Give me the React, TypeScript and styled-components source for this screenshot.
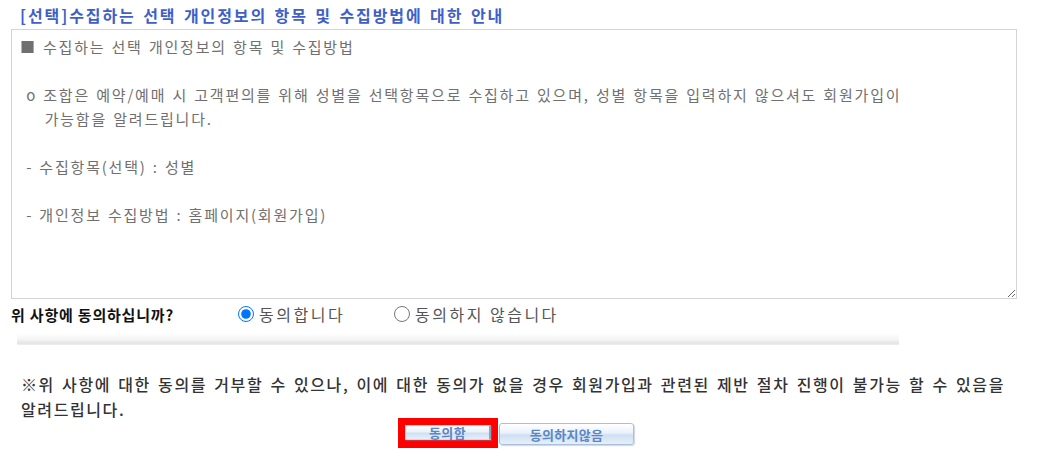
import React from 'react';
import styled, { createGlobalStyle } from 'styled-components';

const GlobalStyle = createGlobalStyle`
  body {
    margin: 0;
    background: #fff;
    font-family: 'Noto Sans CJK KR', 'Noto Sans', sans-serif;
  }
`;

const Page = styled.div`
  width: 1010px;
  padding: 4px 0 0 11px;
`;

const Title = styled.h3`
  margin: 0 0 3px;
  padding-left: 9px;
  font-size: 16px;
  line-height: 22px;
  font-weight: bold;
  color: #3f5fc8;
  letter-spacing: 1.9px;
  word-spacing: 2px;
`;

const InfoBox = styled.textarea`
  display: block;
  box-sizing: border-box;
  width: 1006px;
  height: 270px;
  margin: 0;
  padding: 5px 8px;
  border: 1px solid #d4d4d4;
  color: #707070;
  font-family: 'Noto Sans CJK KR', 'Noto Sans', sans-serif;
  font-size: 15px;
  line-height: 24px;
  letter-spacing: 1.8px;
  word-spacing: 1px;
  resize: both;
  outline: none;
`;

const AskRow = styled.div`
  display: flex;
  align-items: center;
  height: 30px;
`;

const Question = styled.span`
  width: 227px;
  font-size: 15px;
  font-weight: bold;
  color: #111;
  letter-spacing: 0.8px;
`;

const Choice = styled.label<{ $width: number }>`
  display: inline-flex;
  align-items: center;
  width: ${(p) => p.$width}px;
  font-size: 16px;
  color: #555;
  letter-spacing: 2.5px;

  input {
    width: 16px;
    height: 16px;
    margin: 0 5px 0 0;
    accent-color: #0075ff;
  }
`;

const Divider = styled.div`
  width: 882px;
  height: 12px;
  margin: 4px 0 0 6px;
  background: linear-gradient(to bottom, #fff 0%, #f6f6f6 50%, #e4e4e4 85%, #f0f0f0 100%);
`;

const Notice = styled.p`
  margin: 27px 0 0;
  padding-left: 10px;
  font-size: 16px;
  line-height: 25px;
  font-weight: 500;
  color: #333;
  letter-spacing: 1.6px;
  word-spacing: 2px;
`;

const Buttons = styled.div`
  display: flex;
  justify-content: center;
  align-items: flex-start;
  gap: 1px;
  margin-top: -4px;
`;

const Highlight = styled.span`
  display: inline-flex;
  border: 7px solid #f00;
  border-bottom-width: 8px;
`;

const ImgButton = styled.button<{ $width: number; $height: number }>`
  box-sizing: border-box;
  width: ${(p) => p.$width}px;
  height: ${(p) => p.$height}px;
  margin-top: 5px;
  padding: 0;
  border: 1px solid #a8c0dc;
  border-radius: 3px;
  background: linear-gradient(to bottom, #ffffff 0%, #eaf2fb 45%, #cfe0f2 55%, #e6eff9 100%);
  box-shadow: 1px 1px 1px rgba(120, 140, 170, 0.35);
  color: #5b86c4;
  font-family: 'Noto Sans CJK KR', 'Noto Sans', sans-serif;
  font-size: 13px;
  line-height: 1;
  font-weight: bold;
  letter-spacing: 0.3px;
  cursor: pointer;

  ${Highlight} & {
    margin-top: 0;
    border-radius: 0;
    border-color: #c9d8ea;
    border-right: 2px solid #8aa4c4;
  }
`;

const infoText = `■ 수집하는 선택 개인정보의 항목 및 수집방법

 o 조합은 예약/예매 시 고객편의를 위해 성별을 선택항목으로 수집하고 있으며, 성별 항목을 입력하지 않으셔도 회원가입이
    가능함을 알려드립니다.

 - 수집항목(선택) : 성별

 - 개인정보 수집방법 : 홈페이지(회원가입)`;

const App = () => {
  const [agree, setAgree] = React.useState('Y');
  return (
    <Page>
      <GlobalStyle />
      <Title>[선택]수집하는 선택 개인정보의 항목 및 수집방법에 대한 안내</Title>
      <InfoBox readOnly defaultValue={infoText} />
      <AskRow>
        <Question>위 사항에 동의하십니까?</Question>
        <Choice $width={156}>
          <input type="radio" name="agree" checked={agree === 'Y'} onChange={() => setAgree('Y')} />
          동의합니다
        </Choice>
        <Choice $width={200}>
          <input type="radio" name="agree" checked={agree === 'N'} onChange={() => setAgree('N')} />
          동의하지 않습니다
        </Choice>
      </AskRow>
      <Divider />
      <Notice>
        ※위 사항에 대한 동의를 거부할 수 있으나, 이에 대한 동의가 없을 경우 회원가입과 관련된 제반 절차 진행이 불가능 할 수 있음을 알려드립니다.
      </Notice>
      <Buttons>
        <Highlight>
          <ImgButton $width={86} $height={15}>동의함</ImgButton>
        </Highlight>
        <ImgButton $width={135} $height={22}>동의하지않음</ImgButton>
      </Buttons>
    </Page>
  );
};

export default App;
